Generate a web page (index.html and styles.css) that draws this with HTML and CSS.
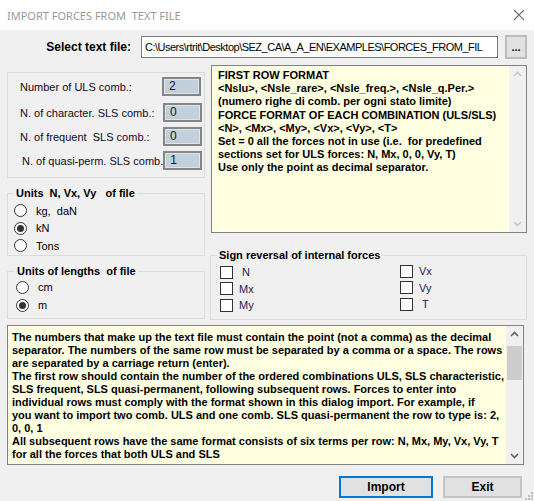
FILE: index.html
```html
<!DOCTYPE html>
<html lang="en">
  <head>
    <meta charset="UTF-8" />
    <title>Import forces from text file</title>
    <link rel="stylesheet" href="styles.css">
  </head>
  <body>
    <div class="window">
      <div class="titlebar">
        <span class="title">IMPORT FORCES FROM  TEXT FILE</span>
        <svg class="close" width="12" height="12" viewBox="0 0 12 12">
          <path d="M1 1 L11 11 M11 1 L1 11" stroke="#707070" stroke-width="1.1" fill="none" />
        </svg>
      </div>

      <div class="client">
        <div class="file-row">
          <label class="file-label">Select text file:</label>
          <div class="file-input">C:\Users\rtrit\Desktop\SEZ_CA\A_A_EN\EXAMPLES\FORCES_FROM_FIL</div>
          <button class="browse">...</button>
        </div>

        <div class="main">
          <div class="left">
            <div class="group counts">
              <div class="count-row first">
                <span class="count-label">Number of ULS comb.:</span>
                <span class="count-box">2</span>
              </div>
              <div class="count-row">
                <span class="count-label">N. of character. SLS comb.:</span>
                <span class="count-box">0</span>
              </div>
              <div class="count-row">
                <span class="count-label">N. of frequent  SLS comb.:</span>
                <span class="count-box">0</span>
              </div>
              <div class="count-row">
                <span class="count-label shift">N. of quasi-perm. SLS comb.</span>
                <span class="count-box">1</span>
              </div>
            </div>

            <fieldset class="group units-force">
              <legend>Units  N, Vx, Vy   of file</legend>
              <div class="radio-row"><span class="radio"></span><span>kg,  daN</span></div>
              <div class="radio-row"><span class="radio checked"></span><span>kN</span></div>
              <div class="radio-row"><span class="radio"></span><span>Tons</span></div>
            </fieldset>

            <fieldset class="group units-length">
              <legend>Units of lengths  of file</legend>
              <div class="radio-row"><span class="radio"></span><span>cm</span></div>
              <div class="radio-row"><span class="radio checked"></span><span>m</span></div>
            </fieldset>
          </div>

          <div class="right">
            <div class="memo format-memo">
              <div class="memo-text">
                FIRST ROW FORMAT<br>
                &lt;Nslu&gt;, &lt;Nsle_rare&gt;, &lt;Nsle_freq.&gt;, &lt;Nsle_q.Per.&gt;<br>
                (numero righe di comb. per ogni stato limite)<br>
                FORCE FORMAT OF EACH COMBINATION (ULS/SLS)<br>
                &lt;N&gt;, &lt;Mx&gt;, &lt;My&gt;, &lt;Vx&gt;, &lt;Vy&gt;, &lt;T&gt;<br>
                Set = 0 all the forces not in use (i.e.&nbsp; for predefined<br>
                sections set for ULS forces: N, Mx, 0, 0, Vy, T)<br>
                Use only the point as decimal separator.
              </div>
              <div class="scrollbar disabled">
                <svg class="arrow" width="17" height="17" viewBox="0 0 17 17">
                  <path d="M5 10 L8.5 6.5 L12 10" stroke="#c8c8c8" stroke-width="1.6" fill="none" />
                </svg>
                <div class="track"></div>
                <svg class="arrow" width="17" height="17" viewBox="0 0 17 17">
                  <path d="M5 7 L8.5 10.5 L12 7" stroke="#c8c8c8" stroke-width="1.6" fill="none" />
                </svg>
              </div>
            </div>

            <fieldset class="group sign">
              <legend>Sign reversal of internal forces</legend>
              <div class="sign-cols">
                <div class="sign-col">
                  <div class="check-row"><span class="check"></span><span class="pad">N</span></div>
                  <div class="check-row"><span class="check"></span><span>Mx</span></div>
                  <div class="check-row"><span class="check"></span><span>My</span></div>
                </div>
                <div class="sign-col second">
                  <div class="check-row"><span class="check"></span><span>Vx</span></div>
                  <div class="check-row"><span class="check"></span><span>Vy</span></div>
                  <div class="check-row"><span class="check"></span><span class="pad">T</span></div>
                </div>
              </div>
            </fieldset>
          </div>
        </div>

        <div class="memo notes-memo">
          <div class="memo-text">
            The numbers that make up the text file must contain the point (not a comma) as the decimal<br>
            separator. The numbers of the same row must be separated by a comma or a space. The rows<br>
            are separated by a carriage return (enter).<br>
            The first row should contain the number of the ordered combinations ULS, SLS characteristic,<br>
            SLS frequent, SLS quasi-permanent, following subsequent rows. Forces to enter into<br>
            individual rows must comply with the format shown in this dialog import. For example, if<br>
            you want to import two comb. ULS and one comb. SLS quasi-permanent the row to type is: 2,<br>
            0, 0, 1<br>
            All subsequent rows have the same format consists of six terms per row: N, Mx, My, Vx, Vy, T<br>
            for all the forces that both ULS and SLS
          </div>
          <div class="scrollbar">
            <svg class="arrow" width="17" height="17" viewBox="0 0 17 17">
              <path d="M5 10 L8.5 6.5 L12 10" stroke="#606060" stroke-width="1.6" fill="none" />
            </svg>
            <div class="track"><div class="thumb"></div></div>
            <svg class="arrow" width="17" height="17" viewBox="0 0 17 17">
              <path d="M5 7 L8.5 10.5 L12 7" stroke="#606060" stroke-width="1.6" fill="none" />
            </svg>
          </div>
        </div>

        <div class="buttons">
          <button class="btn default">Import</button>
          <button class="btn">Exit</button>
        </div>
      </div>

      <svg class="grip" width="8" height="8" viewBox="0 0 8 8">
        <rect x="6" y="0" width="2" height="2" fill="#bdbdbd" />
        <rect x="3" y="3" width="2" height="2" fill="#bdbdbd" />
        <rect x="6" y="3" width="2" height="2" fill="#bdbdbd" />
        <rect x="0" y="6" width="2" height="2" fill="#bdbdbd" />
        <rect x="3" y="6" width="2" height="2" fill="#bdbdbd" />
        <rect x="6" y="6" width="2" height="2" fill="#bdbdbd" />
      </svg>
    </div>
  </body>
</html>
```

FILE: styles.css
```css
* {
  margin: 0;
  padding: 0;
  box-sizing: border-box;
}

body {
  font-family: "Liberation Sans", Arial, sans-serif;
  font-size: 11px;
  color: #000;
  background: #f0f0f0;
}

.window {
  position: relative;
  width: 534px;
  height: 501px;
  overflow: hidden;
  background: #f0f0f0;
}

/* title bar */
.titlebar {
  height: 30px;
  background: #fff;
  display: flex;
  align-items: center;
  justify-content: space-between;
  padding: 0 9px 0 7px;
}

.title {
  font-family: "Noto Sans", "Open Sans", sans-serif;
  font-size: 11px;
  color: #9a9a9a;
  white-space: pre;
}

.client {
  padding: 0 7px;
}

/* file picker */
.file-row {
  display: flex;
  align-items: center;
  height: 24px;
  margin-top: 5px;
}

.file-label {
  width: 124px;
  text-align: right;
  font-weight: bold;
  font-size: 12px;
}

.file-input {
  width: 357px;
  height: 22px;
  margin-left: 10px;
  border: 1px solid #7a7a7a;
  background: #fff;
  padding: 0 3px;
  line-height: 20px;
  font-size: 11px;
  letter-spacing: -0.5px;
  white-space: nowrap;
  overflow: hidden;
}

.browse {
  width: 22px;
  height: 24px;
  margin-left: 7px;
  border: 2px solid #bcbcbc;
  background: #e1e1e1;
  font-family: "Liberation Sans", sans-serif;
  font-weight: bold;
  font-size: 11px;
  line-height: 16px;
}

.main {
  display: flex;
  gap: 6px;
  margin-top: 6px;
}

.left {
  width: 198px;
  padding-top: 7px;
}

.right {
  width: 317px;
}

/* group boxes */
.group {
  border: 1px solid #dcdcdc;
  min-inline-size: 0;
  margin: 0;
}

.group legend {
  font-weight: bold;
  font-size: 11px;
  line-height: 14px;
  padding: 0 2px;
  white-space: pre;
}

.counts {
  height: 106px;
  padding: 4px 2px 0 12px;
}

.count-row {
  display: flex;
  align-items: center;
  justify-content: space-between;
  height: 19px;
  margin-bottom: 5px;
}

.count-row.first {
  margin-bottom: 7px;
  padding-right: 1px;
}

.count-label {
  white-space: pre;
  color: #140a1e;
}

.count-label.shift {
  padding-left: 2px;
}

.count-box {
  width: 39px;
  height: 19px;
  border: 2px solid #858585;
  background: #c3d0dc;
  box-shadow: inset 0 0 0 1px #dde4eb;
  padding-left: 5px;
  line-height: 15px;
  font-size: 12px;
  color: #10103a;
}

.units-force {
  height: 70px;
  margin-top: 8px;
  padding: 2px 0 0 6px;
}

.units-length {
  height: 55px;
  margin-top: 8px;
  padding: 0 0 0 8px;
}

.units-length legend {
  margin-left: -1px;
}

.radio-row {
  display: flex;
  align-items: center;
  height: 17.5px;
  white-space: pre;
}

.units-length .radio-row {
  height: 18px;
}

.radio {
  width: 13px;
  height: 13px;
  border: 1px solid #333;
  border-radius: 50%;
  background: #fff;
  margin-right: 9px;
  display: flex;
  align-items: center;
  justify-content: center;
}

.radio.checked::after {
  content: "";
  width: 7px;
  height: 7px;
  border-radius: 50%;
  background: #333;
}

/* yellow read-only memos */
.memo {
  display: flex;
  border: 1px solid #828282;
  background: #ffffe1;
}

.memo-text {
  flex: 1;
  font-weight: bold;
  font-size: 11px;
  line-height: 13.2px;
  white-space: nowrap;
  overflow: hidden;
}

.format-memo {
  height: 168px;
}

.format-memo .memo-text {
  padding: 3px 0 0 6px;
}

.notes-memo {
  width: 517px;
  height: 140px;
  margin-top: 5px;
}

.notes-memo .memo-text {
  padding: 5px 0 0 4px;
  line-height: 13px;
}

.scrollbar {
  width: 17px;
  display: flex;
  flex-direction: column;
  background: #f0f0f0;
}

.scrollbar .track {
  flex: 1;
}

.thumb {
  width: 15px;
  height: 34px;
  margin: 3px 0 0 1px;
  background: #cdcdcd;
}

.sign {
  height: 72px;
  margin-top: 15px;
  margin-left: -1px;
  padding: 2px 0 0 9px;
}

.sign legend {
  margin-left: -3px;
}

.sign-cols {
  display: flex;
}

.sign-col {
  width: 180px;
  flex-shrink: 0;
}

.sign-col.second {
  width: auto;
  flex: 1;
  margin-top: -1px;
}

.check-row {
  display: flex;
  align-items: center;
  height: 16.5px;
  color: #1c1c50;
}

.check {
  width: 13px;
  height: 13px;
  border: 1px solid #333;
  background: #fff;
  margin-right: 6px;
}

.check-row .pad {
  padding-left: 3px;
}

/* dialog buttons */
.buttons {
  display: flex;
  justify-content: flex-end;
  gap: 10px;
  margin-top: 11px;
  padding-right: 5px;
}

.btn {
  width: 79px;
  height: 22px;
  border: 2px solid #c4c4c4;
  background: #e1e1e1;
  font-family: "Liberation Sans", sans-serif;
  font-weight: bold;
  font-size: 12px;
}

.btn.default {
  width: 94px;
  border-color: #0078d7;
}

.grip {
  position: absolute;
  right: 1px;
  bottom: 1px;
}
```
